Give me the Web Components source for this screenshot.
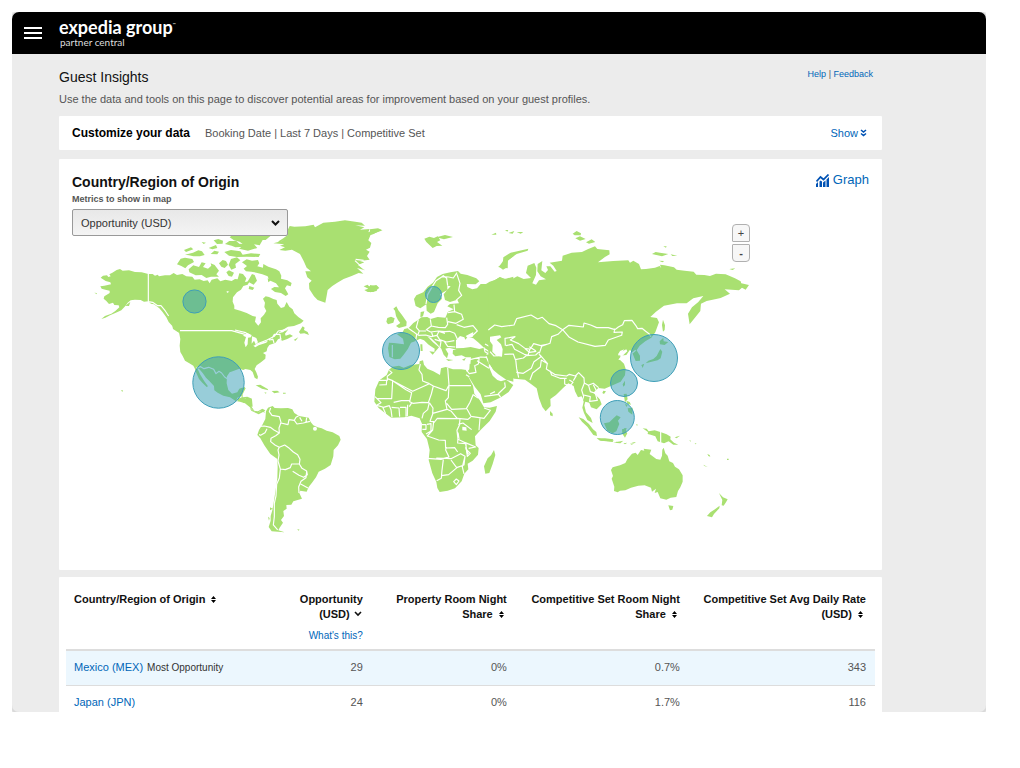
<!DOCTYPE html>
<html lang="en">
<head>
<meta charset="utf-8">
<meta name="viewport" content="width=device-width, initial-scale=1">
<title>Guest Insights</title>
<style>
  body { margin: 12px 34px 12px 12px; background: #fff; color: #111; font-family: "Liberation Sans", Arial, sans-serif; font-size: 11px; }
</style>
</head>
<body>
<app-frame>
  <top-bar slot="header"></top-bar>
  <page-heading>
    Guest Insights
    <span slot="intro">Use the data and tools on this page to discover potential areas for improvement based on your guest profiles.</span>
  </page-heading>
  <customize-bar>Booking Date | Last 7 Days | Competitive Set</customize-bar>
  <origin-card><world-map></world-map></origin-card>
  <insights-table></insights-table>
</app-frame>

<script>
const define = (name, html) => customElements.define(name, class extends HTMLElement {
  constructor() {
    super();
    const t = document.createElement('template');
    t.innerHTML = html;
    this.attachShadow({ mode: 'open' }).append(t.content.cloneNode(true));
  }
});

define('app-frame', `
<style>
  :host { display: block; max-height: calc(100vh - 68px); overflow: hidden; border-radius: 7px; background: #ececec; box-shadow: 0 0 0 1px #dcdcdc, 0 1px 4px 1px rgba(0,0,0,.3); }
  main { display: flex; flex-direction: column; padding: 0 104px 24px 47px; }
</style>
<slot name="header"></slot>
<main><slot></slot></main>`);

define('top-bar', `
<style>
  :host { display: block; }
  header { display: flex; align-items: center; gap: 17px; height: 42px; padding: 0 12px; background: #000; color: #fff; font-family: Lato, sans-serif; }
  button { width: 18px; height: 18px; padding: 0; border: 0; background: none; }
  svg { display: block; }
  a { display: block; padding-bottom: 2px; color: inherit; text-decoration: none; }
  .name { display: flex; font-size: 18px; font-weight: 700; line-height: 20px; }
  .name small { font-size: 4px; line-height: 16px; font-weight: 400; }
  .sub { display: block; font-size: 10px; line-height: 10px; padding-left: 1px; color: #ddd; }
</style>
<header>
  <button aria-label="Menu"><svg width="18" height="18" viewBox="0 0 18 18" fill="#fff"><path d="M0 3h18v2H0zM0 8h18v2H0zM0 13h18v2H0z"/></svg></button>
  <a href="#"><span class="name">expedia group<small>™</small></span><span class="sub">partner central</span></a>
</header>`);

define('page-heading', `
<style>
  :host { display: block; padding: 12px 0 5px; color: #555; }
  .top { display: flex; justify-content: space-between; padding-right: 9px; }
  h1 { margin: 0; font-size: 14px; line-height: 22px; font-weight: 400; color: #111; }
  nav { font-size: 9px; line-height: 16px; }
  a { color: #0066b8; text-decoration: none; }
  p { margin: 0; font-size: 11px; line-height: 23px; }
</style>
<div class="top"><h1><slot></slot></h1><nav><a href="#">Help</a> | <a href="#">Feedback</a></nav></div>
<p><slot name="intro"></slot></p>`);

define('customize-bar', `
<style>
  :host { display: flex; align-items: center; gap: 15px; height: 34px; padding: 0 15px 0 13px; margin-bottom: 9px; background: #fff; color: #555; border-radius: 1px; }
  h2 { margin: 0; font-size: 12px; color: #000; }
  p { margin: 0; flex: 1; font-size: 11px; }
  a { display: flex; align-items: center; gap: 2px; font-size: 11px; color: #0066b8; text-decoration: none; }
</style>
<h2>Customize your data</h2><p><slot></slot></p>
<a href="#">Show<svg width="7" height="8" viewBox="0 0 7 8" fill="none" stroke="#0052b4" stroke-width="1.600"><path d="M1 1l2.500 2L6 1M1 4.500l2.500 2L6 4.500"/></svg></a>`);

define('origin-card', `
<style>
  :host { display: block; padding: 13px 13px 20px; margin-bottom: 7px; background: #fff; border-radius: 1px; }
  .top { display: flex; justify-content: space-between; align-items: flex-start; }
  h2 { margin: 0; font-size: 14px; line-height: 20px; color: #111; }
  a { display: flex; align-items: center; gap: 4px; font-size: 13px; line-height: 16px; color: #0066b8; text-decoration: none; }
  label { display: block; font-size: 9px; line-height: 14px; font-weight: 700; color: #555; padding-bottom: 3px; }
  .map { position: relative; }
  .pick { position: absolute; left: 0; top: 0; width: 216px; }
  select { appearance: none; box-sizing: border-box; width: 100%; height: 27px; padding: 0 24px 0 8px; border: 1px solid #999; border-radius: 2px; background: linear-gradient(#e8e8e8, #f4f4f4); color: #333; font: 11px "Liberation Sans", Arial, sans-serif; }
  .pick svg { position: absolute; right: 8px; top: 11px; pointer-events: none; }
  .zoom { position: absolute; right: 119px; top: 15px; display: flex; flex-direction: column; gap: 2px; }
  .zoom button { width: 18px; height: 18px; padding: 0; border: 1px solid #b0b0b0; border-radius: 4px 4px 1px 1px; background: #f7f7f7; color: #444; font: 11px/14px "Liberation Sans", Arial, sans-serif; }
  .zoom button + button { border-radius: 1px 1px 4px 4px; font-weight: 700; }
</style>
<div class="top"><h2>Country/Region of Origin</h2>
<a href="#"><svg width="13" height="13" viewBox="0 0 13 13" fill="none" stroke="#0052b4"><path stroke-width="1.700" d="M.5 7.500L4.500 3l3 2.500L12.500.5"/><path fill="#0052b4" stroke="none" d="M0 10l2-2v5H0zM3.500 7.500l1-1 1.500 1V13H3.500zM7 8.500l2.500-2V13H7zM10.500 5.500L13 3v10h-2.500z"/></svg>Graph</a></div>
<label for="metric">Metrics to show in map</label>
<div class="map">
  <slot></slot>
  <div class="pick"><select id="metric"><option>Opportunity (USD)</option></select>
  <svg width="9" height="7" viewBox="0 0 9 7" fill="none" stroke="#111" stroke-width="2"><path d="M1 1l3.500 3.500L8 1"/></svg></div>
  <div class="zoom"><button aria-label="Zoom in">+</button><button aria-label="Zoom out">-</button></div>
</div>`);

/* Each continent group has its own origin and a three-to-one drawing grid. */
define('world-map', `
<style>
  :host { display: block; }
  svg { display: block; width: 100%; height: auto; }
  .land { fill: #a9e071; }
  .water { fill: #fff; }
  .line { fill: none; stroke: #fff; stroke-width: 3.500; stroke-linejoin: round; }
  .pin { fill: rgba(50,155,180,.5); stroke: #3f9fb8; stroke-width: 1; }
</style>
<svg viewBox="72 209 797 341" role="img" aria-label="World map with opportunity by country">
<g transform="translate(85 210) scale(.3333)">
 <path class="land" d="M47 203L54 197 66 196 70 201 77 199 73 193 82 188 95 180 105 177 113 182 132 181 150 186 170 187 190 192 203 192 210 197 218 194 222 199 240 196 255 196 266 189 276 195 292 192 304 199 322 200 329 209 344 208 356 213 368 211 374 220 380 209 397 205 406 214 421 209 440 213 450 207 458 208 463 190 474 192 484 205 480 216 494 214 488 224 475 228 468 239 456 247 444 262 443 275 448 287 448 297 466 302 485 309 503 318 513 320 510 335 520 347 528 337 527 325 537 314 544 303 538 291 540 278 534 266 542 259 552 261 565 267 575 270 577 281 588 294 598 291 605 276 613 290 623 298 628 310 640 321 656 332 648 340 627 348 609 350 594 359 579 370 594 367 600 362 610 358 600 371 602 377 615 373 624 378 607 387 592 392 586 391 590 383 579 388 572 398 553 405 547 414 545 424 534 429 542 434 541 446 528 457 515 466 509 477 514 487 519 500 517 508 509 503 503 486 496 480 481 477 475 480 463 476 443 484 434 487 426 499 425 520 430 540 441 551 457 547 463 536 478 531 482 535 473 553 473 562 487 560 501 566 501 580 500 591 509 603 519 604 532 596 541 601 537 605 528 602 516 610 506 603 493 590 480 580 465 575 452 573 435 562 415 557 398 548 388 541 387 528 373 513 363 503 353 489 342 476 337 475 346 494 358 514 369 529 365 531 352 518 342 507 333 487 329 475 325 467 313 460 300 452 293 438 286 426 284 407 286 387 282 367 272 360 262 348 251 336 244 322 232 305 223 295 207 283 198 281 190 274 177 275 167 270 150 269 137 271 128 278 119 290 109 301 91 309 75 316 61 323 49 327 60 318 79 311 91 303 103 292 101 286 88 285 84 278 72 282 64 273 56 266 58 259 74 249 74 242 61 239 50 236 46 229 58 227 78 223 76 217 62 213Z"/>
 <path class="land" d="M276 163L287 146 300 143 322 147 327 156 309 166 301 175 289 168ZM311 178L325 166 342 171 350 157 362 160 354 171 369 176 379 167 377 160 389 165 402 182 394 193 402 200 378 200 364 204 350 195 332 196 313 187ZM297 120L318 112 325 118 303 126ZM300 134L324 128 340 121 351 124 359 135 345 139 325 139 312 136ZM350 96L363 98 356 102ZM386 91L400 87 414 92 413 101 396 102ZM371 114L393 105 397 114 382 118ZM377 132L388 122 402 125 397 133ZM402 160L413 150 423 153 429 164 419 174 409 170ZM418 126L438 120 466 124 473 134 498 130 526 132 521 141 486 140 456 141 432 137ZM420 102L433 93 453 92 463 101 485 103 479 110 451 112 440 107ZM438 147L456 142 466 151 451 162 453 173 439 179 431 165ZM424 187L432 181 447 188 441 200 431 198ZM434 82L451 68 546 65 559 76 542 90 533 90 524 106 507 103 517 114 489 122 462 116 477 105 464 95 447 91ZM471 157L485 148 501 152 519 150 523 160 517 169 534 173 535 162 550 170 573 178 583 184 589 197 588 206 607 211 620 219 617 229 606 226 600 235 610 253 602 258 588 249 570 246 558 237 568 231 582 232 573 220 553 211 548 199 532 193 514 188 499 185 483 184 476 176 486 168ZM485 220L501 192 509 195 516 212 506 224 492 217ZM493 228L508 233 503 240 491 237ZM548 205l10 6-8 6z"/>
 <path class="land" d="M642 366L653 349 659 353 657 360 668 366 672 375 658 370 646 371ZM626 390l14-8-8 10zM262 347l20 8 10 13-8 2-20-13zM245 318l9 8-4 4zM120 287l16-11-4 12zM28 248l7 1 1 4zM108 541l6 0-2 5zM512 526L526 524 548 537 550 541 531 536ZM560 543L577 542 584 547 568 550ZM538 547l7 1-3 3zM594 548h8v3h-8z"/>
 <path class="line" d="M190 190V275M190 275l13 2 15 10 10 0 13 16 10 15M285 362H440L480 373M334 475L347 470 357 476 371 472 386 478 393 491 402 484 410 489 419 501 428 507M470 560l-12 5-3 9M480 566l6 8 14-3M507 600l8-12M450 360L482 368 494 375M512 404L546 390 568 379 580 363 606 359M561 385l7-12 17 0 3 20M552 390l12-2 3 11"/>
 <path class="water" d="M474 377L486 369 500 375 498 382 489 383 488 403 482 412 478 398 483 381ZM501 379L514 384 519 397 512 403 507 392 500 401ZM505 407L532 397 549 392 544 398 521 406 511 412ZM425 243l8 2-7 4z"/>
</g>
<g transform="translate(235 210) scale(.3333)">
 <path class="land" d="M115 100L150 91 127 96 145 85 158 75 155 66 164 48 178 50 211 49 236 44 240 52 265 38 300 35 330 31 361 35 380 38 390 47 361 46 388 52 375 59 404 57 400 67 420 57 443 61 427 67 407 74 400 91 409 99 405 113 393 119 404 125 396 138 404 149 375 153 388 157 369 165 390 181 366 174 385 191 371 189 350 198 326 207 307 218 292 228 278 240 275 257 271 278 248 270 237 259 223 237 222 220 230 212 217 202 211 184 228 184 215 173 206 153 195 132 171 119 151 122 133 120 150 112 135 107 148 103ZM386 229L398 224 402 229 424 225 433 234 415 246 398 246 388 240 400 236Z"/>
 <path class="line" d="M360 152l28 26M362 148l24 3"/>
</g>
<g transform="translate(230 395) scale(.3333)">
 <path class="land" d="M33 16L48 10 66 14 68 35 61 34 54 25 40 23ZM59 38l13 11 15 3 10-7 9 8-7-2-13 7-22-11zM108 49L114 38 128 33 134 39 153 40 174 39 187 43 193 54 207 63 220 65 236 68 242 81 250 91 263 97 275 100 290 107 308 112 328 123 332 134 324 151 311 165 310 184 302 210 285 221 266 230 258 247 246 263 236 276 230 290 211 287 208 294 216 311 190 319 184 329 169 330 170 341 160 348 162 363 153 375 159 383 149 398 145 406 164 412 125 409 116 396 122 377 122 363 127 346 132 317 137 284 142 250 143 217 142 192 121 177 103 151 91 130 82 120 87 105 98 88 106 72ZM120 337l8 4-8 5zM114 365l5 4-2 8zM202 402l7 2-4 3z"/>
 <path class="line" d="M122 39L118 50 126 61 148 65 153 82 147 99 148 114 132 105 121 97 103 93 90 94M111 101L105 113 92 121 87 119M148 65M148 114L137 122 123 130 122 140 136 151 148 157 164 150 178 160 190 171 203 179 210 193 208 207 185 207 181 218 166 224 151 222 144 198 147 180 144 165 148 156M153 84L174 89 177 74 193 76 198 67 206 62M193 76L201 87 220 84 240 79M209 67L216 79M230 68L228 81M208 207L216 220 230 228 232 239 221 247 207 241 188 229M230 230L228 248 213 259 206 276 207 294M212 267L234 279M151 222L148 249 140 268 138 303 133 325 133 365 130 390 143 405"/>
 <circle cx="255" cy="101" r="6" class="water"/>
</g>
<g transform="translate(370 225) scale(.3333)">
 <path class="land" d="M132 222L139 211 160 202 173 185 189 173 201 156 218 147 241 142 264 138 272 146 292 150 319 160 328 169 317 178 290 177 292 186 307 193 321 190 332 177 348 177 359 170 375 165 389 157 405 162 430 155 430 470 410 465 385 448 370 435 360 420 353 430 312 435 300 430 303 397 287 397 275 391 256 394 248 386 249 375 260 374 237 368 226 371 235 386 231 400 221 389 214 371 198 353 183 339 172 334 189 352 207 367 202 373 193 383 194 371 176 359 162 346 150 341 135 349 123 353 114 371 101 389 91 401 74 403 58 396 54 370 57 353 72 354 102 358 99 341 81 328 98 321 103 312 116 309 130 294 145 284 154 277 172 276 182 282 203 276 226 278 234 260 251 253 232 244 240 237 267 235 262 224 240 231 225 225 221 208 232 194 242 184 232 182 232 195 210 208 216 221 203 235 192 261 182 266 170 257 169 238 151 250 137 243ZM151 277l1-16 11-2-4 15zM49 290L52 279 63 275 74 280 70 293 54 298ZM78 303L91 294 84 285 78 273 75 257 70 251 79 244 85 256 96 270 110 290 109 303 87 309ZM163 41L178 35 192 39 203 34 211 46 201 51 217 62 200 63 188 69 169 51ZM199 37L225 30 249 36 222 43ZM0 13L24 10 35 14 9 28 0 30ZM0 180L24 185 20 198 0 202ZM387 125L402 104 425 83 431 93 409 111 412 127 399 134ZM178 379l17 2-7 8zM151 358h6l1 20h-6zM228 402l22 3-15 3zM276 404l12-6-5 9z"/>
 <path class="water" d="M258 346L270 333 283 337 286 344 293 336 310 340 326 353 342 368 328 372 302 366 280 369 258 370ZM365 332L389 327 397 335 386 344 393 354 401 366 396 385 380 382 378 363 363 343ZM287 333l23-12-2 15-15 3z"/>
 <path class="line" d="M168 237L173 209 185 188 198 167 216 155 236 156M233 182L230 160 218 151M236 156L250 159 261 143M261 148L270 175 266 196 275 211 258 226M252 239L254 260 234 263M254 260L275 268 280 283 258 295 234 290M145 284L139 307 148 318 143 331M181 283L184 303 205 307 226 308 233 298 230 278M260 299L282 307 309 302 322 318 306 333M184 303L169 314 182 321 205 318 225 320 239 319 254 325 263 344M148 318L168 318M145 331L167 330 183 335 201 331 209 344 230 351 253 347M201 331L207 319 225 325M194 343L213 349 210 367M223 349l10 15 23 2M115 310l15 10 10 8-3 18M185 322l3 11M67 360L67 397M341 369L359 381 350 389M345 357l22 12M430 299L410 295 386 302 363 300 359 317 373 331M300 404L332 396 350 397M328 396L325 417 302 428M348 394L361 423M342 367L345 380 361 390 371 384"/>
</g>
<g transform="translate(365 350) scale(.3333)">
 <path class="land" d="M65 75L72 59 83 50 102 47 116 53 137 45 163 42 164 34 174 31 177 44 187 56 205 64 225 75 228 55 242 51 264 58 289 58 304 60 310 80 324 107 328 131 344 150 357 172 374 173 396 168 392 185 374 213 349 238 330 259 332 286 341 294 339 314 323 332 308 341 310 358 298 371 290 394 270 415 248 422 224 426 217 414 214 396 202 370 191 330 194 300 186 267 170 246 171 221 164 205 139 197 118 202 79 203 61 190 41 174 28 155 31 118 43 91ZM303 70L313 58 314 41 329 47 372 51 383 77 397 90 408 94 423 89 445 105 431 126 408 142 377 157 355 160 347 133 330 111 313 83ZM387 300L391 315 383 342 373 369 361 371 357 349 368 325 378 316Z"/>
 <path class="line" d="M42 91H67V79L81 68 73 61M43 105L64 104 65 91M67 86L83 92 143 124 193 101 205 108 243 122 252 105 248 53M83 92L80 146 36 146M30 140l18 18-13 8 18 5 9 20M166 42L162 60 171 73 173 93 193 101M254 107L318 107M83 92L123 119 140 128 134 155 144 160 171 157 190 158 199 132 205 108M86 157L109 152 134 152M55 172l18-5 5 12 3 23M80 172l22 2 2 26M105 172h18v28M128 164l-1 34M133 170l8-13M193 158L188 179 175 190 171 205M193 158L204 174 203 190 246 178 241 153 250 143 252 105M204 190L195 214 206 215 203 240 187 258 221 270 241 271 242 294 269 293 278 306M246 178L259 184 277 206 217 205 206 219M245 160L260 178 304 176 315 157 325 133M306 177L318 199 357 205 376 181 357 174M277 205L309 208 317 201M345 205L342 241M280 223L294 219 320 239M285 208L283 226 276 241 279 268 301 278 332 291 311 295M279 260L278 279 302 281 307 319 316 310 304 298 303 282M187 325L228 328 252 321 242 300 244 291M214 324L258 326 287 311 300 319 297 345 275 353 258 330M235 329L231 361 229 385 215 392M229 377L251 374 276 353M299 323L292 351 297 372M266 395l8-8 8 6-8 11zM358 139L401 133 407 142M399 132L421 111 419 97M304 60l9 11 20-4-4-20M303 74l10 6M372 55l-36-23M171 224h12v14h-11M186 223l12-2 0 22-15 9M325 134l14 10M380 56l-8-10"/>
 <path class="water" d="M292 230l12 2 1 10-13-1zM276 245l5 3 3 20-4-3zM300 292l4 0 8 20-5 2z"/>
</g>
<g transform="translate(490 220) scale(.3333)">
 <path class="land" d="M-5 190L15 180 30 171 42 176 65 178 82 169 101 177 123 174 108 159 113 137 133 129 139 143 138 165 127 190 138 194 147 181 168 178 152 169 142 154 143 132 157 123 154 151 166 159 174 150 169 139 181 139 194 155 200 153 190 137 179 128 216 122 218 107 245 98 276 96 293 88 315 79 322 87 358 91 359 103 345 111 324 127 370 123 415 121 420 128 430 122 447 132 453 148 468 147 495 143 509 138 514 145 510 134 523 136 552 142 560 149 584 152 611 155 619 164 643 165 660 168 678 161 707 163 735 175 752 184 754 190 777 195 767 209 756 203 747 211 704 208 720 221 692 234 675 238 650 243 633 251 631 273 616 292 599 313 594 281 606 262 625 246 640 228 610 235 590 250 561 250 522 257 498 275 481 291 501 294 507 307 496 337 484 353 466 364 449 377 440 391 450 407 450 422 437 423 428 401 420 389 409 405 387 407 403 388 390 393 384 405 394 411 388 418 402 431 407 446 405 466 392 485 368 496 344 506 325 504 310 518 329 537 335 553 320 568 303 562 298 548 286 545 283 556 288 577 303 594 308 609 292 600 282 579 277 563 281 545 275 529 264 532 255 514 251 498 235 490 220 503 198 525 181 537 182 558 167 574 157 561 147 535 140 505 124 493 105 479 73 476 40 465 10 445-5 430ZM53 145L24 141 38 131 40 112 62 98 115 86 113 92 80 102 54 121ZM248 41L260 33 273 40 272 46 254 46ZM256 55L270 49 287 57 270 62ZM288 67L305 58 316 66 297 71ZM55 39l18-6-5 8zM80 36l20 0-8 5zM4 44l14-6 1 6zM45 30l10 0-3 5zM180 573l8 8 0 8-8-3zM266 592L280 597 297 612 309 628 319 636 321 648 310 645 292 620 276 605ZM320 655L345 655 370 658 366 664 330 662ZM340 512l8 2-6 8-5-3zM401 522L410 521 413 538 405 547ZM398 493l7-11 0 13-5 5zM342 610L358 607 371 594 380 586 392 592 384 602 388 612 379 634 368 640 352 632ZM396 628L411 624 404 633 412 640 405 653 397 641ZM413 565L428 563 427 584 415 575ZM405 551l8 4-4 6zM520 79l10 0-2 4zM486 102L497 96 510 98 535 102 516 109ZM542 103l20 4-15 1zM507 122l16 1-6 4zM718 147l18-2-8 5zM519 299L525 316 524 330 519 335 516 315ZM509 364L520 353 521 364 535 366 524 375 510 373ZM511 387L517 395 512 415 503 421 485 425 467 430 475 422 490 417 500 408 505 398ZM454 435L463 431 458 444ZM370 668l30-6-9 8z"/>
 <path class="water" d="M0 350L30 346 34 352 20 360 33 373 38 388 36 410 20 408 7 395 8 375 0 364ZM385 400l24-12 3 6-15 14 5 13-17-2 8-10z"/>
 <path class="line" d="M-5 330L14 315 35 320 72 315 80 296 123 285 143 297 157 292 177 311 198 317 218 329 204 343 185 350 180 370 155 379 148 400M218 329L237 316 280 321 282 309 302 315 320 323 355 323 375 329 385 321 398 314 403 302 426 301 437 316 443 326 456 325 467 334 477 341 483 350M218 329L238 352 264 366 315 379 346 376 355 360 395 346 397 336 372 337 375 326M46 377L45 355 75 350 61 360 86 371 106 386 121 387 131 371 152 377 174 372M48 377L66 373 74 388 103 403 114 406 120 386M43 403L70 402 76 419 100 414 109 407 137 405 147 396M77 418L80 446 86 473M79 457L100 460 124 445 132 425 153 410 147 402M150 405L172 430 169 447 196 464 230 468 238 463 256 468 266 458 282 474 283 489 295 496 310 490 326 503M120 480L128 459 151 441 154 420 174 432M180 452L185 465 210 475 230 475M224 475L224 492 240 498 249 487 238 480M250 482L259 467M284 487L275 510 281 530 276 544M296 497L301 515 316 520 322 541 299 544 301 530 281 525M310 494L320 514 331 536M105 386L118 397 139 394M118 380L137 392M0 395L12 408 25 407M15 515L0 522M426 400L437 391"/>
</g>
<g transform="translate(560 390) scale(.3333)">
 <path class="land" d="M153 240L158 232 180 226 196 219 202 208 216 191 227 188 233 195 243 180 253 182 251 176 274 179 269 192 289 207 301 209 306 197 307 179 311 173 316 190 323 197 328 214 339 219 345 230 357 238 368 256 368 275 361 292 354 303 349 321 332 323 319 329 301 325 293 306 284 309 288 296 276 305 273 293 254 286 235 287 213 293 196 301 180 302 173 307 162 303 163 290 155 266 159 258ZM325 346L340 348 337 359 330 361ZM477 309L489 322 503 328 498 337 491 347 485 346 487 330ZM479 347L478 355 462 372 456 382 441 378 451 367 465 358ZM248 115L260 116 266 124 284 121 301 126 320 133 332 140 331 148 342 158 355 164 340 164 326 154 312 160 293 154 286 139 272 134 263 132 264 126ZM344 142L360 137 350 145ZM110 143L135 150 161 151 158 156 125 152ZM168 155l16 1-13 3zM190 160l12-2-7 5zM210 161l14-1-9 4zM214 157l14-1-5 3zM388 151l5 1-2 3zM404 159l6 2-4 2zM442 192l7 3 2 5-6-2zM430 224l13 7-10-3zM501 206h5v4h-5zM228 104l4-2 0 6zM192 115l6 0 2 18-5-3zM199 32l10 4 4 8-10-2z"/>
 <path class="line" d="M302 125V158"/>
</g>
<g class="pins">
 <circle class="pin" cx="194.500" cy="301.500" r="11.600"/><circle class="pin" cx="218.500" cy="382.500" r="25.700"/>
 <circle class="pin" cx="401" cy="351" r="18.500"/><circle class="pin" cx="433.500" cy="294.500" r="8"/>
 <circle class="pin" cx="654" cy="358" r="23.500"/><circle class="pin" cx="624" cy="383" r="13.500"/><circle class="pin" cx="617.300" cy="417.500" r="17"/>
</g>
</svg>`);

const sorter = '<button aria-label="Sort"><svg width="5" height="7" viewBox="0 0 5 7"><path d="M0 3L2.500 0 5 3zM0 4h5L2.500 7z"/></svg></button>';
define('insights-table', `
<style>
  :host { display: block; padding: 0 7px 16px; background: #fff; border-radius: 1px; }
  table { width: 100%; table-layout: fixed; border-collapse: separate; border-spacing: 0; }
  th { padding: 15px 9px 0 8px; height: 57px; font-size: 11px; line-height: 15px; vertical-align: top; text-align: right; color: #111; border-bottom: 2px solid #ddd; }
  td { padding: 0 9px 2px 8px; height: 32px; text-align: right; font-size: 11px; color: #555; border-bottom: 1px solid #ddd; }
  th:first-child, td:first-child { text-align: left; }
  .best td { background: #ecf7fe; }
  a { color: #0066b8; text-decoration: none; }
  th a { display: block; padding-top: 6px; font-size: 10px; font-weight: 400; }
  small { padding-left: 4px; font-size: 10px; color: #333; }
  button { display: inline-block; margin: 0 3px; padding: 0; border: 0; background: none; line-height: 8px; }
  button svg { display: block; }
  .down { margin: 0 1px; }
  .c1 { width: 24.800%; } .c2 { width: 13%; } .c3 { width: 17.800%; } .c4 { width: 21.400%; }
</style>
<table>
  <colgroup><col class="c1"><col class="c2"><col class="c3"><col class="c4"><col></colgroup>
  <thead><tr>
    <th>Country/Region of Origin ${sorter}</th>
    <th>Opportunity (USD) <button class="down" aria-label="Sorted descending"><svg width="8" height="7" viewBox="0 0 8 7" fill="none" stroke="#111" stroke-width="1.600"><path d="M1 1l3 3 3-3"/></svg></button><a href="#">What's this?</a></th>
    <th>Property Room Night Share ${sorter}</th>
    <th>Competitive Set Room Night Share ${sorter}</th>
    <th>Competitive Set Avg Daily Rate (USD) ${sorter}</th>
  </tr></thead>
  <tbody>
    <tr class="best"><td><a href="#">Mexico (MEX)</a><small>Most Opportunity</small></td><td>29</td><td>0%</td><td>0.7%</td><td>343</td></tr>
    <tr><td><a href="#">Japan (JPN)</a></td><td>24</td><td>0%</td><td>1.7%</td><td>116</td></tr>
  </tbody>
</table>`);
</script>
</body>
</html>
